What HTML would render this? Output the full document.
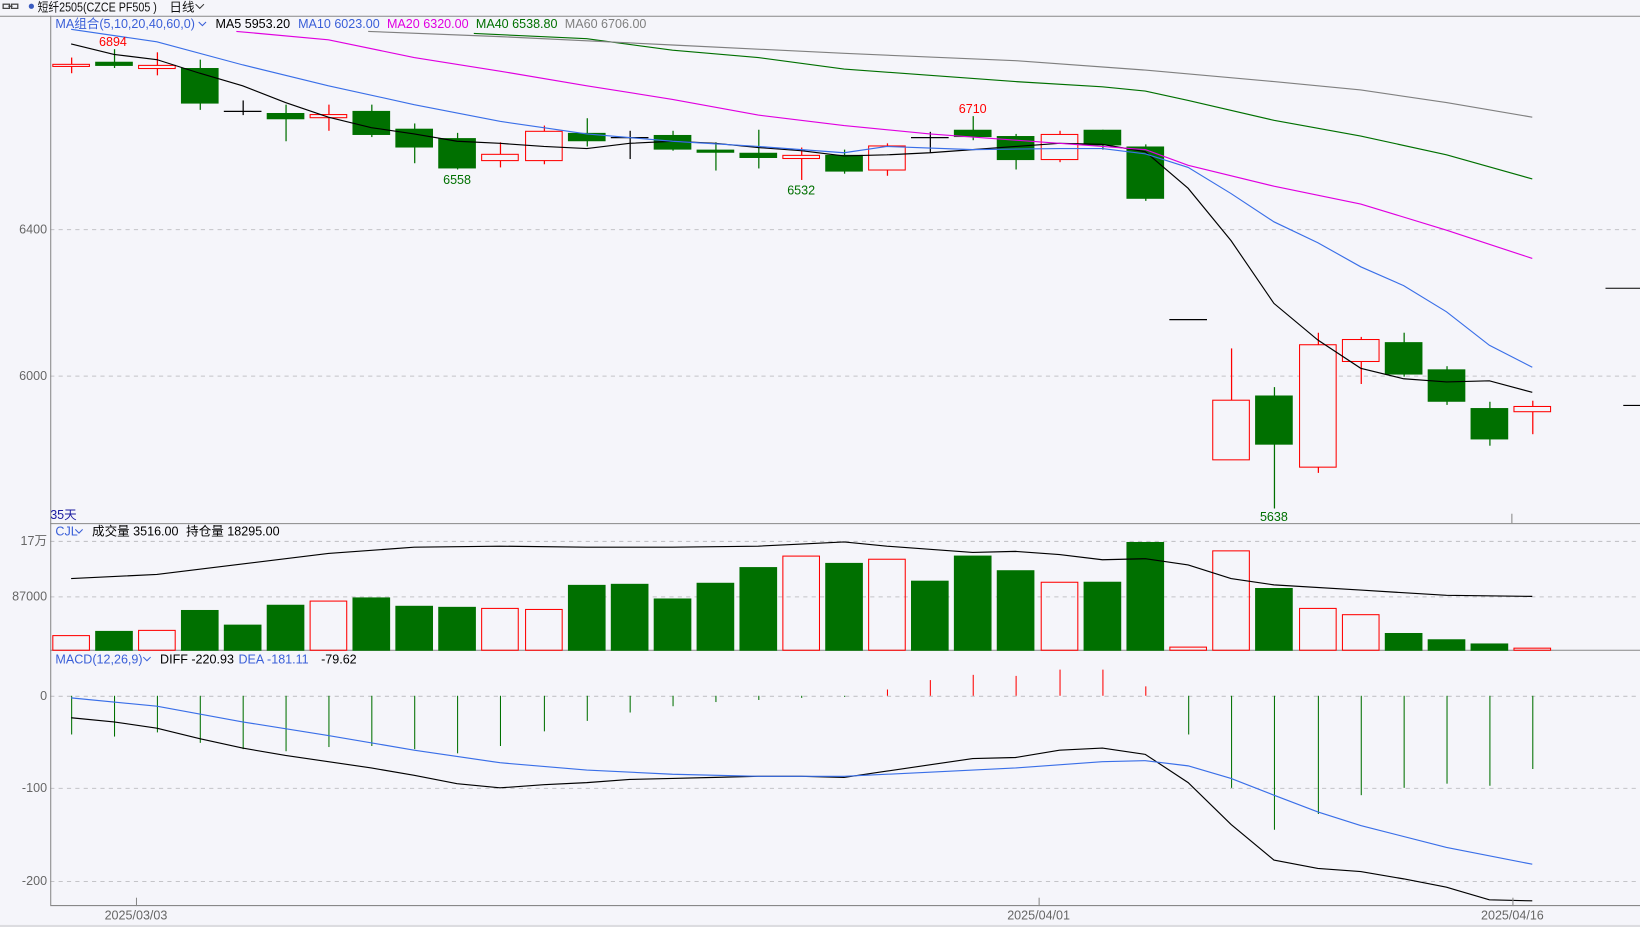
<!DOCTYPE html>
<html><head><meta charset="utf-8"><style>
html,body{margin:0;padding:0;background:#f5f5fa;overflow:hidden}
svg{display:block}
text{font-family:"Liberation Sans","Noto Sans CJK SC",sans-serif;font-size:12px}
</style></head><body>
<svg id="s" width="1640" height="927" viewBox="0 0 1568 886" preserveAspectRatio="none" xmlns="http://www.w3.org/2000/svg">
<rect width="1568" height="886" fill="#f5f5fa"/>
<rect y="884" width="1568" height="2" fill="#dcdce0"/>
<line x1="0" y1="15.5" x2="1568" y2="15.5" stroke="#888"/>
<g fill="none" stroke="#444" stroke-width="1.2"><rect x="3" y="4" width="6" height="4"/><rect x="11" y="4" width="6" height="4"/><line x1="8" y1="6" x2="12" y2="6"/></g>
<circle cx="30" cy="6" r="2.5" fill="#3a5bbf"/>
<text x="36" y="11" fill="#111" textLength="114" lengthAdjust="spacingAndGlyphs">短纤2505(CZCE PF505 )</text>
<text x="162" y="11" fill="#111">日线</text>
<path d="M187 4l4 4 4-4" stroke="#333" fill="none"/>
<text x="53" y="27" fill="#3a5fd8">MA组合(5,10,20,40,60,0)</text>
<path d="M190 21l3.5 3.5 3.5-3.5" stroke="#3a5fd8" fill="none"/>
<text x="206" y="27" fill="#000">MA5 5953.20</text>
<text x="285" y="27" fill="#3a5fd8">MA10 6023.00</text>
<text x="370" y="27" fill="#e000e0">MA20 6320.00</text>
<text x="455" y="27" fill="#007000">MA40 6538.80</text>
<text x="540" y="27" fill="#808080">MA60 6706.00</text>
<g id="g"></g>
</svg>
<script>
var g=document.getElementById('g'),h='';
function L(x1,y1,x2,y2,c,w,d){h+='<line x1="'+x1+'" y1="'+y1+'" x2="'+x2+'" y2="'+y2+'" stroke="'+c+'" stroke-width="'+(w||1)+'"'+(d?' stroke-dasharray="'+d+'"':'')+'/>';}
function P(pts,c){h+='<polyline fill="none" stroke="'+c+'" stroke-width="1.1" points="'+pts.map(function(p){return p.join(',')}).join(' ')+'"/>';}
function T(x,y,s,c,a){h+='<text x="'+x+'" y="'+y+'" fill="'+c+'"'+(a?' text-anchor="'+a+'"':'')+'>'+s+'</text>';}
[219,359,517,570,665,753,842].forEach(function(y){L(48,y+.5,1568,y+.5,'#c4c4c8',1,'4,4');});
L(48.5,15,48.5,865,'#888');L(48,500.5,1568,500.5,'#888');L(48,621.5,1568,621.5,'#888');L(48,865.5,1568,865.5,'#888');
[['6400',223],['6000',363],['17万',521],['87000',574],['0',669],['-100',757],['-200',846]].forEach(function(a){T(45,a[1],a[0],'#666','end');});
var xs=[68,109,150,191,232,273,314,355,396,437,478,520,561,602,643,684,725,766,807,848,889,930,971,1013,1054,1095,1136,1177,1218,1260,1301,1342,1383,1424,1465];
var c=[['r',61,63,55,70],['g',59,63,47,65],['r',62,65,50,72],['g',65,99,57,105],['k',106,106,96,110],['g',108,114,100,135],['r',109,112,100,125],['g',106,129,100,131],['g',123,141,118,156],['g',132,161,127,162],['r',147,153,136,160],['r',125,153,120,157],['g',127,135,113,140],['k',131,131,125,152],['g',129,143,125,144],['g',143,146,136,163],['g',146,151,124,161],['r',148,151,141,172],['g',148,164,143,166],['r',139,162,137,168],['k',131,131,126,146],['g',124,131,111,134],['g',130,153,128,162],['r',128,152,125,155],['g',124,139,124,143],['g',140,190,138,192],['k',305,305,305,305],['r',382,439,333,439],['g',378,425,370,486],['r',329,446,318,452],['r',324,345,322,367],['g',327,358,318,360],['g',353,384,350,387],['g',390,420,384,426],['r',388,393,383,415]];
var col={r:'#f00',g:'#007000',k:'#000'};
c.forEach(function(d,i){var x=xs[i],cl=col[d[0]];
 if(d[4]>d[3])L(x+.5,d[3],x+.5,d[4],cl,1.2);
 if(d[0]=='k'){L(x-18,d[1]+.5,x+18,d[1]+.5,'#000',1.2);}
 else if(d[0]=='g'){h+='<rect x="'+(x-18)+'" y="'+d[1]+'" width="36" height="'+Math.max(2,d[2]-d[1])+'" fill="#007000"/>';}
 else{h+='<rect x="'+(x-17.5)+'" y="'+(d[1]+.5)+'" width="35" height="'+Math.max(1,d[2]-d[1])+'" fill="#f5f5fa" stroke="#f00"/>';}
});
L(1535,275.5,1568,275.5,'#000');L(1552,387.5,1568,387.5,'#000');
P([[68,42],[109,52],[150,57],[191,70],[232,82],[273,98],[314,112],[355,122],[396,128],[437,135],[478,137],[520,140],[561,142],[602,137],[643,135],[684,137],[725,141],[766,144],[807,149],[848,148],[889,146],[930,143],[971,140],[1013,137],[1054,138],[1095,145],[1136,180],[1177,230],[1218,290],[1260,325],[1301,352],[1342,362],[1383,365],[1424,364],[1465,375]],'#000');
P([[68,28],[150,40],[232,62],[314,82],[396,100],[478,116],[561,128],[643,135],[725,140],[807,146],[848,140],[930,143],[1013,142],[1054,142],[1095,147],[1136,160],[1177,185],[1218,212],[1260,232],[1301,255],[1342,273],[1383,298],[1424,330],[1465,351]],'#3a6fe8');
P([[226,30],[314,38],[396,55],[478,68],[561,82],[643,95],[725,110],[807,120],[889,128],[971,134],[1054,140],[1095,143],[1136,158],[1218,178],[1301,195],[1383,220],[1465,247]],'#e000e0');
P([[453,32],[561,37],[643,48],[725,55],[807,66],[889,72],[971,78],[1054,83],[1095,87],[1136,96],[1218,115],[1301,130],[1383,148],[1465,171]],'#007000');
P([[352,30],[478,35],[643,43],[807,51],[971,58],[1095,67],[1218,78],[1301,86],[1383,98],[1465,112]],'#808080');
T(108,44,'6894','#f00','middle');T(437,176,'6558','#007000','middle');T(766,186,'6532','#007000','middle');T(930,108,'6710','#f00','middle');T(1218,498,'5638','#007000','middle');
T(48,496,'35天','#1a1aa0');L(1445.5,491,1445.5,500,'#888');
T(53,512,'CJL','#3a5fd8');h+='<path d="M72 506l3.5 3.5 3.5-3.5" stroke="#3a5fd8" fill="none"/>';
T(88,512,'成交量 3516.00','#000');T(178,512,'持仓量 18295.00','#000');
var vt=[607,603,602,583,597,578,574,571,579,580,581,582,559,558,572,557,542,531,538,534,555,531,545,556,556,518,618,526,562,581,587,605,611,615,619];
vt.forEach(function(t,i){var x=xs[i],d=c[i][0];
 if(d=='r'||(d=='k'&&i==26)){h+='<rect x="'+(x-17.5)+'" y="'+(t+.5)+'" width="35" height="'+(621-t)+'" fill="none" stroke="#f00"/>';}
 else{h+='<rect x="'+(x-18)+'" y="'+t+'" width="36" height="'+(622-t)+'" fill="#007000"/>';}
});
P([[68,553],[150,549],[232,539],[314,529],[396,523],[478,522],[561,523],[643,523],[725,522],[766,520],[807,518],[848,522],[930,528],[971,527],[1013,530],[1054,535],[1095,534],[1136,540],[1177,553],[1218,559],[1301,564],[1383,569],[1465,570]],'#000');
T(53,634,'MACD(12,26,9)','#3a5fd8');h+='<path d="M137 628l3.5 3.5 3.5-3.5" stroke="#3a5fd8" fill="none"/>';
T(153,634,'DIFF -220.93','#000');T(228,634,'DEA -181.11','#3a5fd8');T(307,634,'-79.62','#000');
var mh=[702,704,700,710,716,718,714,713,716,720,713,699,689,681,675,671,669,667,666,659,650,645,646,640,640,656,702,753,793,778,760,753,749,751,735];
mh.forEach(function(v,i){L(xs[i]+.5,665,xs[i]+.5,v,v<665?'#f00':'#007000');});
P([[68,686],[109,690],[150,696],[191,706],[232,715],[273,722],[314,728],[355,734],[396,741],[437,749],[478,753],[520,750],[561,748],[602,745],[643,744],[684,743],[725,742],[766,742],[807,743],[848,737],[889,731],[930,725],[971,724],[1013,717],[1054,715],[1095,721],[1136,748],[1177,788],[1218,822],[1260,830],[1301,833],[1342,840],[1383,848],[1424,860],[1465,861]],'#000');
P([[68,667],[150,675],[232,690],[314,703],[396,717],[478,729],[561,736],[643,740],[725,742],[807,742],[889,738],[971,734],[1054,728],[1095,727],[1136,732],[1177,744],[1218,760],[1260,776],[1301,789],[1383,810],[1465,826]],'#3a6fe8');
[130,993,1446].forEach(function(x){L(x+.5,858,x+.5,866,'#888');});
T(130,879,'2025/03/03','#666','middle');T(993,879,'2025/04/01','#666','middle');T(1446,879,'2025/04/16','#666','middle');
g.innerHTML=h;
</script>
</body></html>
